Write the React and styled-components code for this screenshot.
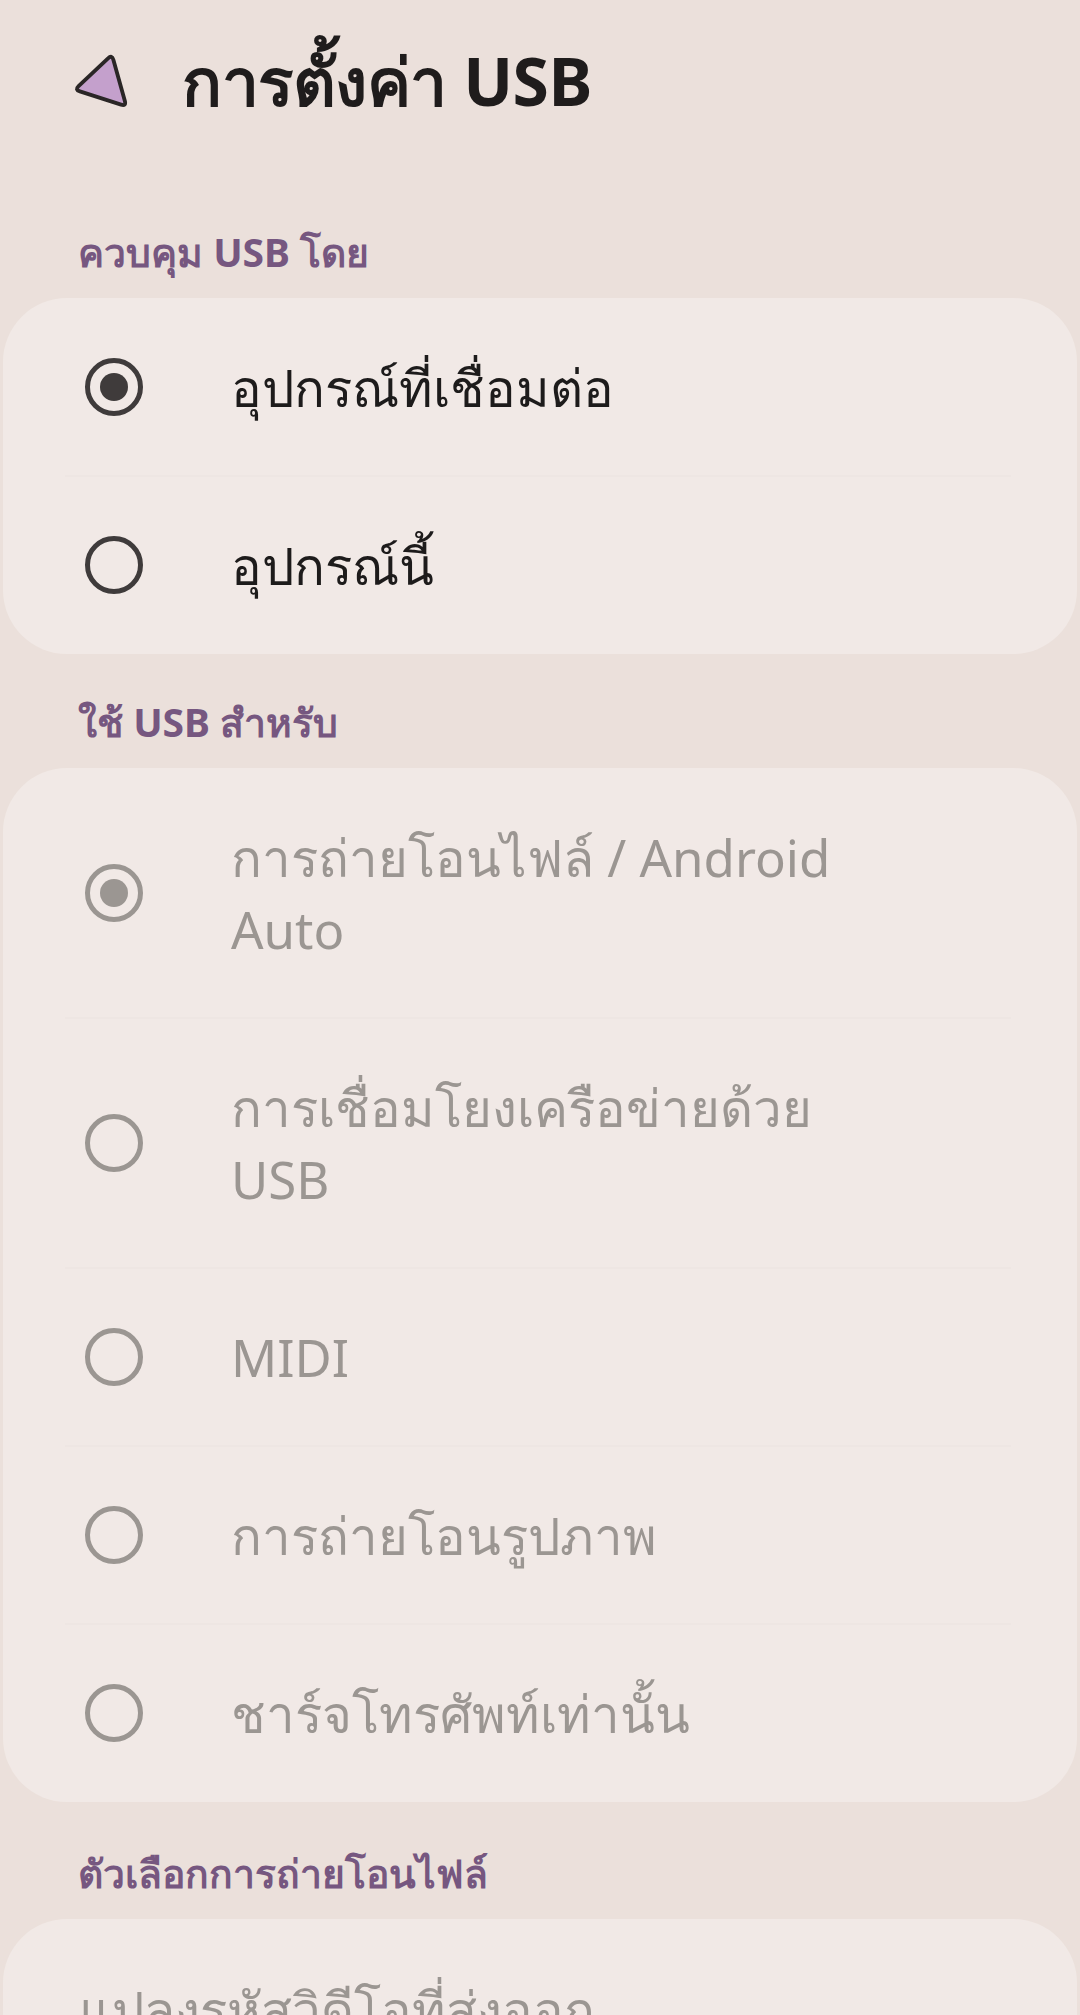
import styled, { createGlobalStyle } from "styled-components"

const Global = createGlobalStyle`
  body {
    margin: 0;
    background: #ebe0db;
    font-family: "Noto Sans", "Open Sans", sans-serif;
  }
`;

const Page = styled.div`
  width: 1080px;
  min-height: 2015px;
  overflow: hidden;
  background: #ebe0db;
`;

const Header = styled.header`
  display: flex;
  align-items: center;
  padding: 42px 0 0 68px;
  height: 77px;
`;

const BackButton = styled.div`
  width: 66px;
  height: 66px;
  display: flex;
  margin-right: 48px;
`;

const Title = styled.h1`
  margin: 0;
  font-size: 66px;
  line-height: 77px;
  font-weight: 700;
  color: #1f1c1c;
  letter-spacing: -0.5px;
`;

const SectionTitle = styled.h2`
  margin: ${p => p.$top}px 0 26px 78px;
  font-size: 39px;
  line-height: 40px;
  font-weight: 700;
  color: #765780;
`;

const Card = styled.div`
  margin: 0 3px;
  background: #f1e9e6;
  border-radius: 64px;
  display: flex;
  flex-direction: column;
`;

const Row = styled.div`
  display: flex;
  align-items: center;
  padding: 53px 0 53px 82px;
  min-height: 72px;
`;

const Divider = styled.div`
  height: 2px;
  margin: -1px 66px -1px 62px;
  background: #eee6e3;
`;

const Radio = styled.span`
  flex: none;
  box-sizing: border-box;
  width: 58px;
  height: 58px;
  border-radius: 50%;
  border: 5px solid ${p => (p.$disabled ? "#9b9692" : "#3f3b3b")};
  display: flex;
  align-items: center;
  justify-content: center;
  margin-right: 88px;

  &::after {
    content: "";
    display: ${p => (p.$checked ? "block" : "none")};
    width: 28px;
    height: 28px;
    border-radius: 50%;
    background: ${p => (p.$disabled ? "#9b9692" : "#3f3b3b")};
  }
`;

const Label = styled.span`
  font-size: 51px;
  line-height: 72px;
  color: ${p => (p.$disabled ? "#9b9692" : "#1d1b1b")};
  max-width: 660px;
`;

const PlainRow = styled.div`
  padding: 54px 76px 60px 76px;
  font-size: 51px;
  line-height: 72px;
  color: #9b9692;
`;

function BackIcon() {
  return (
    <svg width="66" height="66" viewBox="0 0 60 60">
      <path
        d="M36.4 9.4 Q40 6 41.3 10.8 L51.7 48.2 Q53 53 48.2 51.5 L10.8 39.5 Q6 38 9.6 34.6 Z"
        fill="#c4a0cc"
        stroke="#2a2626"
        strokeWidth="3.5"
        strokeLinejoin="round"
      />
    </svg>
  )
}

const controlOptions = [
  { label: "อุปกรณ์ที่เชื่อมต่อ", checked: true },
  { label: "อุปกรณ์นี้", checked: false },
];

const useOptions = [
  { label: "การถ่ายโอนไฟล์ / Android Auto", checked: true },
  { label: "การเชื่อมโยงเครือข่ายด้วย USB", checked: false },
  { label: "MIDI", checked: false },
  { label: "การถ่ายโอนรูปภาพ", checked: false },
  { label: "ชาร์จโทรศัพท์เท่านั้น", checked: false },
];

function RadioList({ items, disabled }) {
  return (
    <Card>
      {items.map((item, i) => (
        <div key={item.label}>
          {i > 0 && <Divider />}
          <Row>
            <Radio $checked={item.checked} $disabled={disabled} />
            <Label $disabled={disabled}>{item.label}</Label>
          </Row>
        </div>
      ))}
    </Card>
  )
}

export default function App() {
  return (
    <Page>
      <Global />
      <Header>
        <BackButton>
          <BackIcon />
        </BackButton>
        <Title>การตั้งค่า USB</Title>
      </Header>

      <SectionTitle $top={113}>ควบคุม USB โดย</SectionTitle>
      <RadioList items={controlOptions} />

      <SectionTitle $top={48}>ใช้ USB สำหรับ</SectionTitle>
      <RadioList items={useOptions} disabled />

      <SectionTitle $top={51}>ตัวเลือกการถ่ายโอนไฟล์</SectionTitle>
      <Card>
        <PlainRow>แปลงรหัสวิดีโอที่ส่งออก</PlainRow>
      </Card>
    </Page>
  )
}
